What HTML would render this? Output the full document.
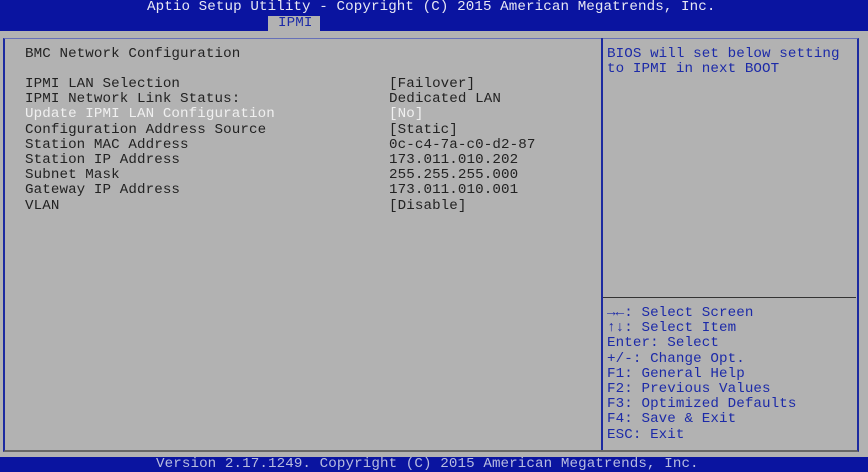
<!DOCTYPE html>
<html><head><meta charset="utf-8"><style>
body{margin:0;width:868px;height:472px;background:#b2b2b2;position:relative;overflow:hidden;font-family:"Liberation Mono","DejaVu Sans Mono",monospace;font-size:14.2px;letter-spacing:0.1px;}
.t{position:absolute;white-space:pre;line-height:15.2px;}
#top{position:absolute;left:0;top:0;width:868px;height:31px;background:#0a14a0;}
#tab{position:absolute;left:268px;top:16px;width:52px;height:15px;background:#b2b2b2;}
#bot{position:absolute;left:0;top:457px;width:868px;height:15px;background:#0a14a0;}
.l{color:#222;}
.r{color:#1c2aa8;}
</style></head><body>
<div id="top"></div><div id="tab"></div>
<div class="t" style="left:147px;top:0;color:#e8e8f4">Aptio Setup Utility - Copyright (C) 2015 American Megatrends, Inc.</div>
<div class="t" style="left:278px;top:16px;color:#1c2aa8">IPMI</div>
<div style="position:absolute;left:3px;top:38px;width:852px;height:411px;border-left:2px solid #1c2aa0;border-top:1px solid #6670b8;border-right:2px solid #1c2aa0;border-bottom:2px solid #666"></div>
<div style="position:absolute;left:601px;top:38px;width:2px;height:412px;background:#1c2aa0"></div>
<div style="position:absolute;left:603px;top:297px;width:253px;height:1px;background:#333"></div>
<div class="t l" style="left:25px;top:47px">BMC Network Configuration</div>
<div class="t l" style="left:25px;top:77px">IPMI LAN Selection
IPMI Network Link Status:
<span style="color:#f0f0f0">Update IPMI LAN Configuration</span>
Configuration Address Source
Station MAC Address
Station IP Address
Subnet Mask
Gateway IP Address
VLAN</div>
<div class="t l" style="left:389px;top:77px">[Failover]
Dedicated LAN
<span style="color:#f0f0f0">[No]</span>
[Static]
0c-c4-7a-c0-d2-87
173.011.010.202
255.255.255.000
173.011.010.001
[Disable]</div>
<div class="t r" style="left:607px;top:47px">BIOS will set below setting
to IPMI in next BOOT</div>
<div class="t r" style="left:607px;top:306px">→←: Select Screen
↑↓: Select Item
Enter: Select
+/-: Change Opt.
F1: General Help
F2: Previous Values
F3: Optimized Defaults
F4: Save &amp; Exit
ESC: Exit</div>
<div id="bot"></div>
<div class="t" style="left:156px;top:457px;color:#b8bce0">Version 2.17.1249. Copyright (C) 2015 American Megatrends, Inc.</div>
</body></html>
